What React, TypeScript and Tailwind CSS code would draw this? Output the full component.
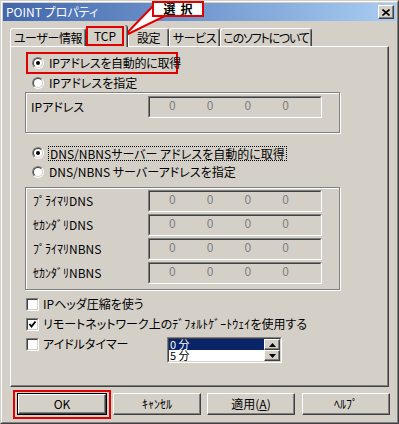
import React from 'react';

const face = 'bg-[#d4d0c8]';

function Radio({ checked }: { checked?: boolean }) {
  return (
    <span className="relative inline-block w-[12px] h-[12px] shrink-0 rounded-full border border-t-[#808080] border-l-[#808080] border-r-white border-b-white">
      <span className="absolute inset-0 rounded-full border border-t-[#404040] border-l-[#404040] border-r-[#d4d0c8] border-b-[#d4d0c8] bg-white flex items-center justify-center">
        {checked && <span className="w-[4px] h-[4px] rounded-full bg-black" />}
      </span>
    </span>
  );
}

function Check({ checked }: { checked?: boolean }) {
  return (
    <span className="inline-block w-[13px] h-[13px] shrink-0 border border-t-[#808080] border-l-[#808080] border-r-white border-b-white">
      <span className="w-full h-full border border-t-[#404040] border-l-[#404040] border-r-[#d4d0c8] border-b-[#d4d0c8] bg-white flex items-center justify-center">
        {checked && (
          <svg width="9" height="9" viewBox="0 0 9 9">
            <polyline points="1.5,4 3.5,6.5 7.5,1.5" fill="none" stroke="black" strokeWidth="1.8" />
          </svg>
        )}
      </span>
    </span>
  );
}

function IpField() {
  return (
    <div className="w-[174px] h-[22px] shrink-0 border border-t-[#808080] border-l-[#808080] border-r-white border-b-white">
      <div className="h-full border border-t-[#404040] border-l-[#404040] border-r-[#d4d0c8] border-b-[#d4d0c8] flex pl-[19px] text-[#808080] leading-[13px]">
        {[0, 1, 2, 3].map((i) => (
          <span key={i} className="w-[42px]">0</span>
        ))}
      </div>
    </div>
  );
}

function Tab({ label, w, tight }: { label: string; w: string; tight?: boolean }) {
  return (
    <div
      className={`${w} h-[18px] flex items-center justify-center border-t border-l border-r border-t-white border-l-white border-r-[#404040] rounded-t-[3px] shadow-[inset_-1px_0_0_#808080] leading-[14px] ${tight ? 'tracking-[-1.2px]' : 'tracking-[-0.4px]'}`}
    >
      {label}
    </div>
  );
}

function Btn({ label, w, def }: { label: React.ReactNode; w: string; def?: boolean }) {
  const inner = (
    <div className="w-full h-full flex items-center justify-center border border-t-white border-l-white border-r-[#404040] border-b-[#404040] shadow-[inset_-1px_-1px_0_#808080] leading-[14px]">
      {label}
    </div>
  );
  return (
    <div className={`${w} h-[22px] shrink-0 ${def ? 'border border-black' : ''}`}>{inner}</div>
  );
}

function ScrollBtn({ up }: { up?: boolean }) {
  return (
    <div className="w-[16px] h-[12px] flex items-center justify-center border border-t-white border-l-white border-r-[#404040] border-b-[#404040] shadow-[inset_-1px_-1px_0_#808080] bg-[#d4d0c8]">
      <svg width="7" height="4" viewBox="0 0 7 4">
        {up ? <polygon points="3.5,0 7,4 0,4" fill="black" /> : <polygon points="0,0 7,0 3.5,4" fill="black" />}
      </svg>
    </div>
  );
}

export default function App() {
  const dnsRows = ['ﾌﾟﾗｲﾏﾘDNS', 'ｾｶﾝﾀﾞﾘDNS', 'ﾌﾟﾗｲﾏﾘNBNS', 'ｾｶﾝﾀﾞﾘNBNS'];

  return (
    <div
      className={`relative w-[399px] h-[424px] ${face} text-black text-[12px] whitespace-nowrap font-['Noto_Sans_CJK_JP','Noto_Sans',sans-serif] [font-feature-settings:'palt'] border border-t-[#d4d0c8] border-l-[#d4d0c8] border-r-[#404040] border-b-[#404040] overflow-hidden`}
    >
      <div className="w-full h-full flex flex-col border border-t-white border-l-white border-r-[#808080] border-b-[#808080]">
        {/* Title bar */}
        <div className="mx-[1px] mt-[1px] h-[18px] flex items-center justify-between pl-[3px] pr-[2px] bg-gradient-to-r from-[#4266ac] to-[#a9cdf2]">
          <span className="text-white leading-[14px]">POINT プロパティ</span>
          <div className="w-[16px] h-[14px] flex items-center justify-center bg-[#d4d0c8] border border-t-white border-l-white border-r-[#404040] border-b-[#404040] shadow-[inset_-1px_-1px_0_#808080]">
            <svg width="8" height="7" viewBox="0 0 8 7">
              <path d="M0.5 0.5 L7.5 6.5 M7.5 0.5 L0.5 6.5" stroke="black" strokeWidth="1.6" />
            </svg>
          </div>
        </div>

        {/* Tabs */}
        <div className="mt-[4px] ml-[8px] h-[21px] flex items-end">
          <Tab label="ユーザー情報" w="w-[76px]" />
          <div className="relative z-10 w-[42px] h-[22px] -mb-[1px] bg-[#d4d0c8] border-r border-r-[#404040] shadow-[inset_-1px_0_0_#808080] rounded-tr-[3px]">
            <div className="absolute left-0 top-[1px] w-[38px] h-[20px] border-2 border-[#e00000] flex items-center justify-center leading-[14px]">
              TCP
            </div>
          </div>
          <Tab label="設定" w="w-[41px]" />
          <Tab label="サービス" w="w-[51px]" />
          <Tab label="このソフトについて" w="w-[92px]" tight />
        </div>

        {/* Panel */}
        <div className="ml-[8px] w-[379px] h-[341px] shrink-0 flex flex-col pl-[14px] border border-t-white border-l-white border-r-[#404040] border-b-[#404040] shadow-[inset_-1px_-1px_0_#808080]">
          <div className="mt-[5px] ml-[1px] w-[152px] h-[22px] border-2 border-[#e00000] flex items-center pl-[4px] gap-[5px] leading-[14px]">
            <Radio checked />
            <span className="tracking-[-0.3px]">IPアドレスを自動的に取得</span>
          </div>
          <div className="h-[17px] flex items-center pl-[7px] gap-[5px] leading-[14px]">
            <Radio />
            <span>IPアドレスを指定</span>
          </div>

          <div className="mt-[1px] w-[315px] h-[41px] border border-[#808080] shadow-[inset_1px_1px_0_#fff,1px_1px_0_#fff] pt-[3px] pl-[5px]">
            <div className="h-[22px] flex items-center">
              <span className="w-[117px] leading-[14px]">IPアドレス</span>
              <IpField />
            </div>
          </div>

          <div className="mt-[11px] h-[18px] flex items-center pl-[7px] leading-[13px]">
            <Radio checked />
            <span className="ml-[4px] px-[1px] border border-dotted border-black">
              DNS/NBNSサーバー アドレスを自動的に取得
            </span>
          </div>
          <div className="mt-[1px] h-[18px] flex items-center pl-[7px] gap-[5px] leading-[14px]">
            <Radio />
            <span>DNS/NBNS サーバーアドレスを指定</span>
          </div>

          <div className="mt-[6px] w-[315px] h-[103px] border border-[#808080] shadow-[inset_1px_1px_0_#fff,1px_1px_0_#fff] pt-[2px] pl-[7px] flex flex-col gap-[2px]">
            {dnsRows.map((r) => (
              <div key={r} className="h-[22px] flex items-center">
                <span className="w-[115px] leading-[14px]">{r}</span>
                <IpField />
              </div>
            ))}
          </div>

          <div className="mt-[6px] h-[16px] flex items-center pl-[1px] gap-[4px] leading-[14px]">
            <Check />
            <span>IPヘッダ圧縮を使う</span>
          </div>
          <div className="mt-[4px] h-[16px] flex items-center pl-[1px] gap-[4px] leading-[14px]">
            <Check checked />
            <span>リモートネットワーク上のﾃﾞﾌｫﾙﾄｹﾞｰﾄｳｪｲを使用する</span>
          </div>
          <div className="mt-[4px] flex items-start pl-[1px]">
            <div className="w-[141px] h-[16px] flex items-center gap-[4px] leading-[14px]">
              <Check />
              <span>アイドルタイマー</span>
            </div>
            <div className="mt-[1px] w-[115px] h-[26px] border border-t-[#808080] border-l-[#808080] border-r-white border-b-white">
              <div className="w-full h-full flex border border-t-[#404040] border-l-[#404040] border-r-[#d4d0c8] border-b-[#d4d0c8] bg-white">
                <div className="flex-1 flex flex-col overflow-hidden text-[11px] leading-[11px]">
                  <div className="h-[11px] shrink-0 bg-[#0a246a] text-white pl-[1px]">0 分</div>
                  <div className="h-[11px] shrink-0 pl-[1px]">5 分</div>
                </div>
                <div className="flex flex-col">
                  <ScrollBtn up />
                  <ScrollBtn />
                </div>
              </div>
            </div>
          </div>
        </div>

        {/* Buttons */}
        <div className="mt-[3px] pl-[11px] flex items-start">
          <div className="w-[98px] h-[29px] border-2 border-[#e00000] pl-[2px] pt-[1px]">
            <Btn label="OK" w="w-[90px]" def />
          </div>
          <div className="ml-[2px] mt-[3px]">
            <Btn label="ｷｬﾝｾﾙ" w="w-[88px]" />
          </div>
          <div className="ml-[6px] mt-[3px]">
            <Btn label={<span>適用(<span className="underline">A</span>)</span>} w="w-[88px]" />
          </div>
          <div className="ml-[7px] mt-[3px]">
            <Btn label="ﾍﾙﾌﾟ" w="w-[88px]" />
          </div>
        </div>
      </div>

      {/* Callout */}
      <svg className="absolute left-0 top-0" width="220" height="50" viewBox="0 0 220 50">
        <polygon points="153,4 164,15 123,35" fill="white" stroke="#e00000" strokeWidth="2" strokeLinejoin="miter" />
      </svg>
      <div className="absolute left-[151px] top-0 w-[52px] h-[16px] border-2 border-[#e00000] bg-white flex items-center justify-center font-bold tracking-[5px] pl-[5px] leading-[12px]">
        選択
      </div>
    </div>
  );
}
